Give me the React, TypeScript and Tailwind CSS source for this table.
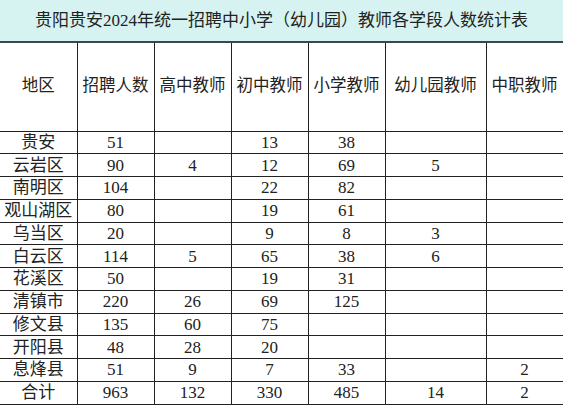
import React from 'react';

const headers = ['地区', '招聘人数', '高中教师', '初中教师', '小学教师', '幼儿园教师', '中职教师'];
const widths = ['w-[77px]', 'w-[77px]', 'w-[77px]', 'w-[77px]', 'w-[77px]', 'w-[101px]', 'w-[77px]'];

const rows: string[][] = [
  ['贵安', '51', '', '13', '38', '', ''],
  ['云岩区', '90', '4', '12', '69', '5', ''],
  ['南明区', '104', '', '22', '82', '', ''],
  ['观山湖区', '80', '', '19', '61', '', ''],
  ['乌当区', '20', '', '9', '8', '3', ''],
  ['白云区', '114', '5', '65', '38', '6', ''],
  ['花溪区', '50', '', '19', '31', '', ''],
  ['清镇市', '220', '26', '69', '125', '', ''],
  ['修文县', '135', '60', '75', '', '', ''],
  ['开阳县', '48', '28', '20', '', '', ''],
  ['息烽县', '51', '9', '7', '33', '', '2'],
  ['合计', '963', '132', '330', '485', '14', '2'],
];

const App: React.FC = () => {
  return (
    <div className="w-[563px] h-[406px] overflow-hidden bg-white text-[#222] font-['Liberation_Serif','Noto_Sans_CJK_SC',serif]">
      {/* Title band */}
      <div className="h-[43px] bg-[#d6f3f1] border-b-2 border-[#3c4848] flex items-center justify-center text-[17px]">
        贵阳贵安2024年统一招聘中小学（幼儿园）教师各学段人数统计表
      </div>

      <table className="table-fixed border-collapse w-[563px]">
        <colgroup>
          {widths.map((w, i) => (
            <col key={i} className={w} />
          ))}
        </colgroup>
        <thead>
          <tr className="h-[88px]">
            {headers.map((h, i) => (
              <th
                key={i}
                className={`font-normal text-[16.5px] whitespace-nowrap p-0 border-[1.5px] border-[#222] border-t-0 ${i === 0 ? 'border-l-0' : ''}`}
              >
                {h}
              </th>
            ))}
          </tr>
        </thead>
        <tbody>
          {rows.map((r, ri) => (
            <tr key={ri} className="h-[22.75px]">
              {r.map((c, ci) => (
                <td
                  key={ci}
                  className={`text-center text-[17px] leading-none whitespace-nowrap p-0 border-[1.5px] border-[#222] ${ci === 0 ? 'border-l-0' : ''}`}
                >
                  {c}
                </td>
              ))}
            </tr>
          ))}
        </tbody>
      </table>
    </div>
  );
};

export default App;
